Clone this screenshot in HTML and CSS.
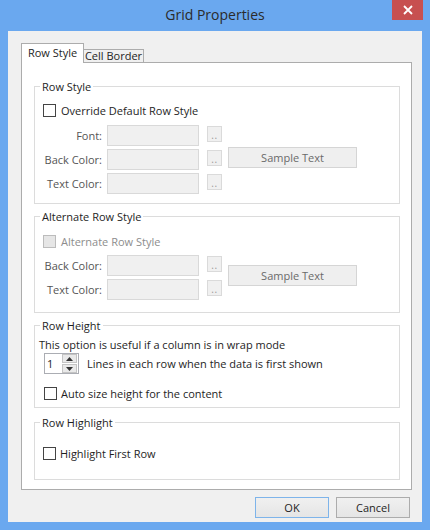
FILE: index.html
```html
<!DOCTYPE html>
<html>
<head>
<meta charset="utf-8">
<link rel="stylesheet" href="styles.css">
</head>
<body>
<div class="window">
  <div class="titlebar">
    <span class="title">Grid Properties</span>
    <div class="close"><svg width="10" height="10" viewBox="0 0 10 10"><path d="M1 1 L9 9 M9 1 L1 9" stroke="#fff" stroke-width="1.8" fill="none"/></svg></div>
  </div>
  <div class="client">
    <div class="tabs">
      <div class="tab active">Row Style</div>
      <div class="tab">Cell Border</div>
    </div>
    <div class="panel">
      <div class="group g1">
        <span class="legend">Row Style</span>
        <div class="check-row cr1"><span class="cb"></span><span>Override Default Row Style</span></div>
        <div class="form f1">
          <span class="lbl">Font:</span><span class="field"></span><span class="dots">..</span>
          <span class="lbl">Back Color:</span><span class="field"></span><span class="dots">..</span><span class="sample s1">Sample Text</span>
          <span class="lbl">Text Color:</span><span class="field"></span><span class="dots">..</span>
        </div>
      </div>
      <div class="group g2">
        <span class="legend">Alternate Row Style</span>
        <div class="check-row cr2"><span class="cb disabled"></span><span class="dim">Alternate Row Style</span></div>
        <div class="form f2">
          <span class="lbl">Back Color:</span><span class="field"></span><span class="dots">..</span><span class="sample s2">Sample Text</span>
          <span class="lbl">Text Color:</span><span class="field"></span><span class="dots">..</span>
        </div>
      </div>
      <div class="group g3">
        <span class="legend">Row Height</span>
        <div class="info">This option is useful if a column is in wrap mode</div>
        <div class="num-row">
          <div class="num">
            <span class="num-val">1</span>
            <div class="spin">
              <span class="spin-btn"><svg width="7" height="4" viewBox="0 0 7 4"><path d="M0 4 L3.5 0 L7 4 Z" fill="#333"/></svg></span>
              <span class="spin-btn"><svg width="7" height="4" viewBox="0 0 7 4"><path d="M0 0 L7 0 L3.5 4 Z" fill="#333"/></svg></span>
            </div>
          </div>
          <span>Lines in each row when the data is first shown</span>
        </div>
        <div class="check-row cr3"><span class="cb"></span><span>Auto size height for the content</span></div>
      </div>
      <div class="group g4">
        <span class="legend">Row Highlight</span>
        <div class="check-row cr4"><span class="cb"></span><span>Highlight First Row</span></div>
      </div>
    </div>
    <div class="buttons">
      <div class="btn default">OK</div>
      <div class="btn">Cancel</div>
    </div>
  </div>
</div>
</body>
</html>
```
FILE: styles.css
```css
* { box-sizing: border-box; }
body {
  margin: 0;
  font-family: "Open Sans", "Noto Sans", sans-serif;
  font-size: 11px;
  color: #1e1e1e;
}
.window {
  width: 430px;
  height: 530px;
  background: #6aa8ef;
  display: flex;
  flex-direction: column;
}
.titlebar {
  height: 31px;
  display: grid;
  grid-template-columns: 1fr auto 1fr;
  align-items: start;
}
.title {
  grid-column: 2;
  font-size: 14px;
  line-height: 30px;
  color: #2b2b2b;
}
.close {
  grid-column: 3;
  justify-self: end;
  width: 31px;
  height: 20px;
  margin-right: 7px;
  background: #c75050;
  display: flex;
  align-items: center;
  justify-content: center;
}
.client {
  margin: 0 8px 8px;
  flex: 1;
  background: #f0f0f0;
  padding: 12px 10px 4px 13px;
  display: flex;
  flex-direction: column;
}
.tabs {
  display: flex;
  align-items: flex-end;
  height: 19px;
  position: relative;
  z-index: 1;
}
.tab {
  border: 1px solid #acacac;
  border-bottom: none;
  text-align: center;
  white-space: nowrap;
}
.tab.active {
  width: 63px;
  height: 20px;
  margin-bottom: -1px;
  background: #fff;
  line-height: 18px;
}
.tab:not(.active) {
  width: 60px;
  height: 13px;
  border-left: none;
  background: #f0f0f0;
  line-height: 12px;
}
.panel {
  width: 391px;
  background: #fff;
  border: 1px solid #acacac;
  padding: 0 11px 9px 12px;
  display: flex;
  flex-direction: column;
}
.group {
  border: 1px solid #dcdcdc;
  display: flex;
  flex-direction: column;
  align-items: flex-start;
}
.g1 { margin-top: 23px; height: 118px; }
.g2 { margin-top: 12px; height: 97px; }
.g3 { margin-top: 12px; height: 83px; }
.g4 { margin-top: 14px; height: 58px; }
.legend {
  margin: -8px 0 0 5px;
  padding: 0 2px;
  background: #fff;
  height: 15px;
  line-height: 15px;
  white-space: nowrap;
}
.check-row {
  display: flex;
  align-items: center;
  height: 15px;
  gap: 5px;
  margin-left: 8px;
  white-space: nowrap;
}
.cr1 { margin-top: 9px; }
.cr2 { margin-top: 10px; }
.cr3 { margin-top: 12px; margin-left: 9px; gap: 4px; }
.cr4 { margin-top: 16px; gap: 4px; }
.cb {
  width: 13px;
  height: 13px;
  border: 1px solid #444;
  background: #fff;
  flex: none;
}
.cb.disabled {
  border-color: #bcbcbc;
  background: #e6e6e6;
}
.dim { color: #8d8d8d; }
.form {
  display: grid;
  grid-template-columns: 67px 97px 23px 135px;
  grid-auto-rows: 21px;
  row-gap: 3px;
}
.f1 { margin-top: 7px; }
.f2 { margin-top: 6px; }
.lbl {
  text-align: right;
  align-self: center;
  color: #555;
  white-space: nowrap;
  grid-column: 1;
}
.field {
  grid-column: 2;
  margin-left: 5px;
  background: #f0f0f0;
  border: 1px solid #d9d9d9;
}
.dots {
  grid-column: 3;
  margin: 1px 0 0 8px;
  width: 15px;
  height: 16px;
  background: #f0f0f0;
  border: 1px solid #dadada;
  color: #9a9a9a;
  font-size: 10px;
  line-height: 17px;
  text-align: center;
  letter-spacing: 0.5px;
}
.sample {
  grid-column: 4;
  margin-left: 6px;
  height: 21px;
  background: #efefef;
  border: 1px solid #d5d5d5;
  color: #6a6a6a;
  text-align: center;
  line-height: 19px;
}
.s1 { grid-row: 2; margin-top: -2px; }
.s2 { grid-row: 1 / 3; align-self: start; margin-top: 10px; }
.info {
  margin: 4px 0 0 4px;
  line-height: 15px;
  white-space: nowrap;
}
.num-row {
  display: flex;
  align-items: center;
  gap: 8px;
  margin: 1px 0 0 9px;
  white-space: nowrap;
}
.num {
  width: 35px;
  height: 21px;
  border: 1px solid #abadb3;
  display: flex;
  background: #fff;
}
.num-val {
  flex: 1;
  padding-left: 2px;
  line-height: 19px;
}
.spin {
  width: 15px;
  margin-right: 1px;
  display: flex;
  flex-direction: column;
  gap: 1px;
}
.spin-btn {
  flex: 1;
  border: 1px solid #c4c4c4;
  background: #e9e9e9;
  display: flex;
  align-items: center;
  justify-content: center;
}
.buttons {
  display: flex;
  justify-content: flex-end;
  gap: 7px;
  margin: 7px 2px 0 0;
}
.btn {
  width: 74px;
  height: 21px;
  border: 1px solid #acacac;
  background: linear-gradient(#f0f0f0, #e5e5e5);
  text-align: center;
  line-height: 19px;
}
.btn.default { border-color: #7eb4ea; }
```
